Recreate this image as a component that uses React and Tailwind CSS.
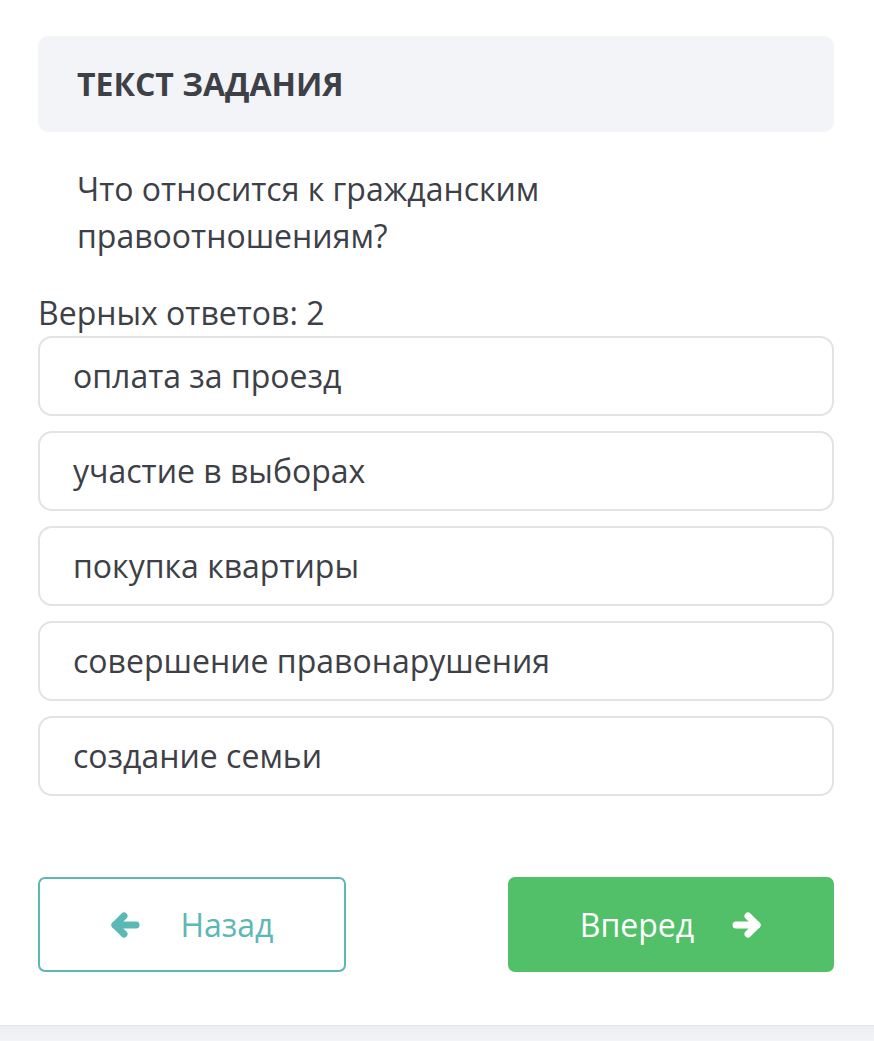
const answers = [
  "оплата за проезд",
  "участие в выборах",
  "покупка квартиры",
  "совершение правонарушения",
  "создание семьи",
];

const Arrow = ({ dir }) => (
  <svg
    width="30"
    height="26"
    viewBox="0 0 30 26"
    fill="none"
    stroke="currentColor"
    strokeWidth="7"
    strokeLinecap="round"
    strokeLinejoin="round"
    className={dir === "left" ? "" : "rotate-180"}
  >
    <path d="M5 13H26" />
    <path d="M14 4L5 13L14 22" />
  </svg>
);

const App = () => {
  return (
    <div className="min-h-[1041px] bg-white flex flex-col font-['Open_Sans',sans-serif] text-[#3d4047]">
      <div className="pl-[38px] pr-[40px] pt-[36px] flex flex-col flex-1">
        <div className="bg-[#f3f4f7] rounded-[10px] h-[96px] flex items-center px-[39px]">
          <h1 className="text-[32px] font-bold">ТЕКСТ ЗАДАНИЯ</h1>
        </div>
        <p className="px-[39px] mt-[33px] text-[32px] leading-[47px] max-w-[600px]">
          Что относится к гражданским правоотношениям?
        </p>
        <div className="mt-[33px] text-[32px] leading-[42px]">Верных ответов: 2</div>
        <ul className="mt-[2px] flex flex-col gap-[15px]">
          {answers.map((a) => (
            <li
              key={a}
              className="h-[80px] shrink-0 border-2 border-[#e3e3e3] rounded-[14px] flex items-center px-[33px] text-[32px]"
            >
              {a}
            </li>
          ))}
        </ul>
        <div className="mt-[81px] flex justify-between">
          <button className="w-[308px] h-[95px] border-2 border-[#5bb8b4] rounded-[7px] flex items-center justify-center gap-[40px] text-[#5bb8b4] text-[32px]">
            <Arrow dir="left" />
            <span>Назад</span>
          </button>
          <button className="w-[326px] h-[95px] bg-[#52c069] rounded-[7px] flex items-center justify-center gap-[38px] text-white text-[32px]">
            <span>Вперед</span>
            <Arrow dir="right" />
          </button>
        </div>
      </div>
      <div className="h-[16px] mt-[52px] border-t border-[#e2e4e8] bg-gradient-to-b from-[#eceef2] to-[#f3f4f7]" />
    </div>
  );
};

export default App;
